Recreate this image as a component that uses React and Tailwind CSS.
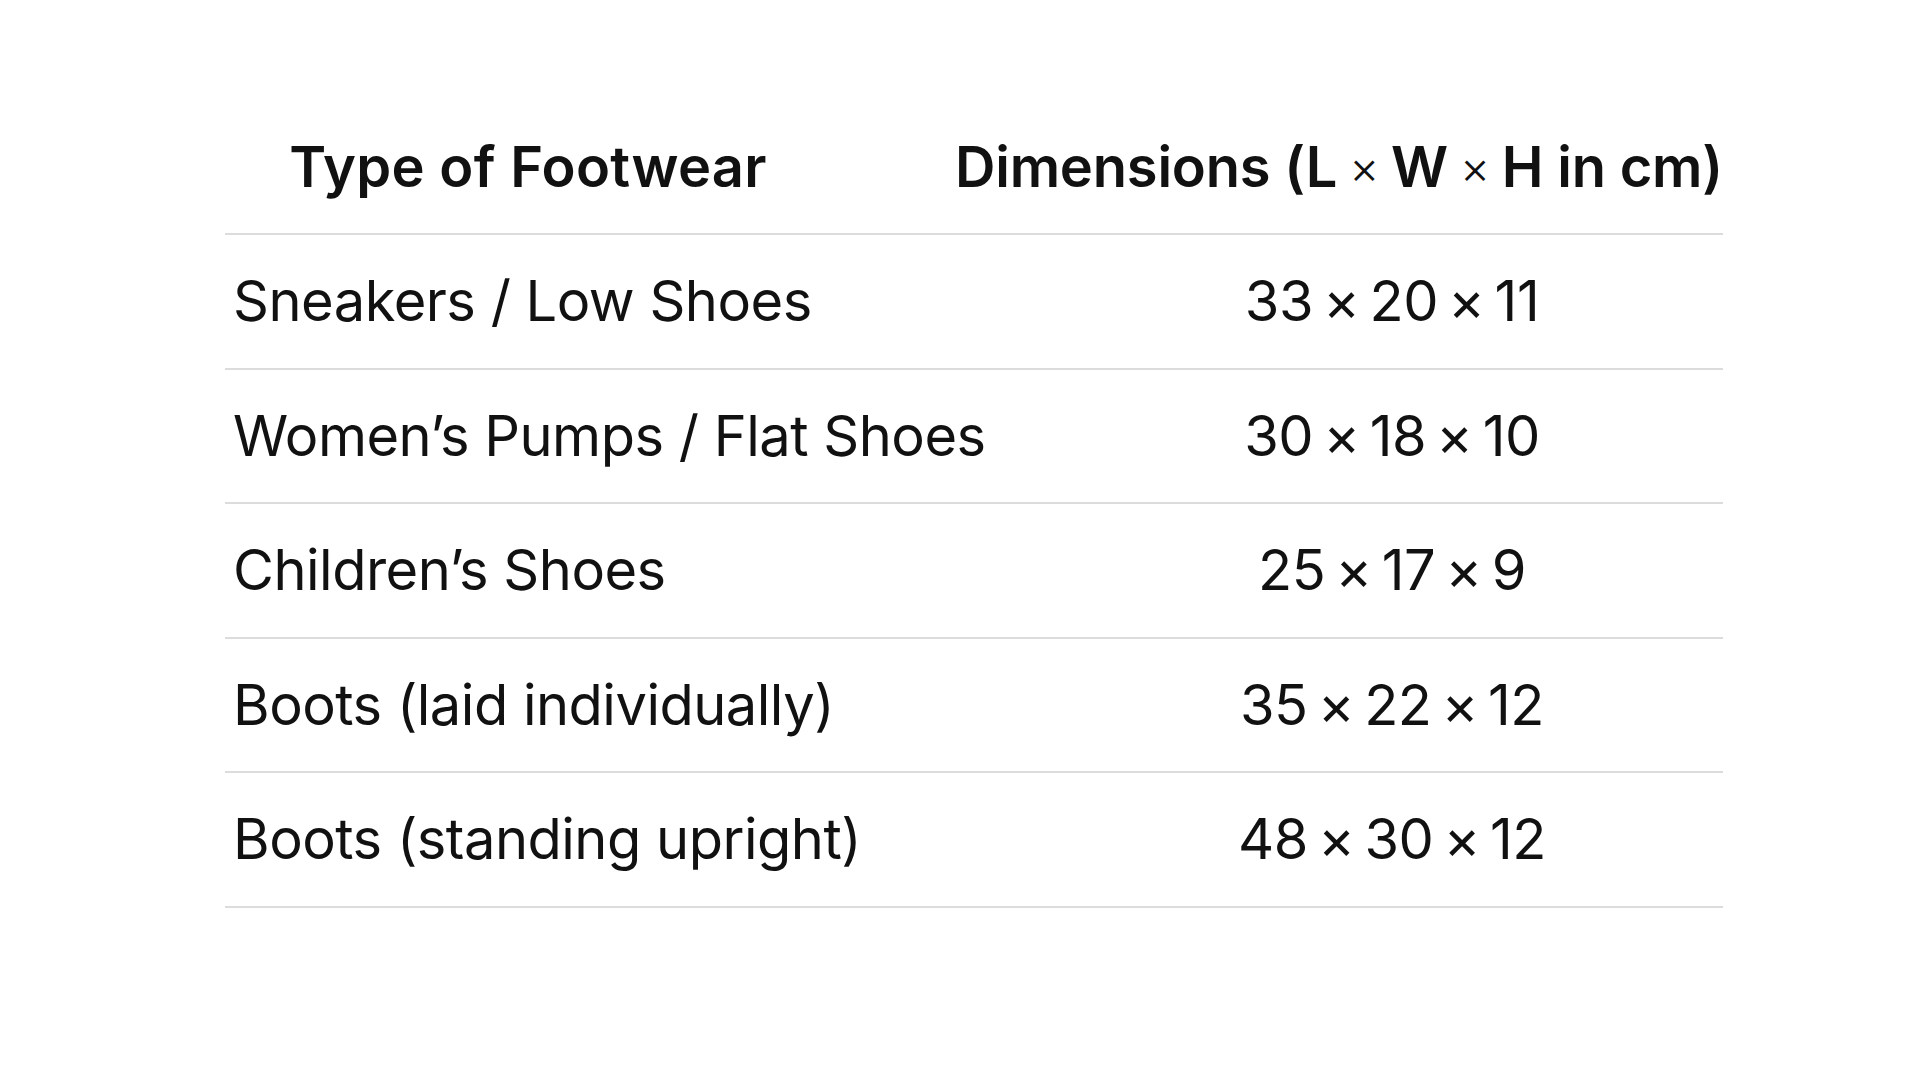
import React from "react";

const rows = [
  { type: "Sneakers / Low Shoes", dims: ["33", "20", "11"] },
  { type: "Women’s Pumps / Flat Shoes", dims: ["30", "18", "10"] },
  { type: "Children’s Shoes", dims: ["25", "17", "9"] },
  { type: "Boots (laid individually)", dims: ["35", "22", "12"] },
  { type: "Boots (standing upright)", dims: ["48", "30", "12"] },
];

// the header uses a lighter, smaller multiplication sign
function Times() {
  return (
    <span className="inline-block align-[3px] text-[46px] font-light mx-[12px] leading-none">
      ×
    </span>
  );
}

export default function App() {
  return (
    <div
      className="min-h-screen bg-white pt-[100px] pl-[225px] text-[#111111]"
      style={{ fontFamily: "Inter, 'Noto Sans', sans-serif" }}
    >
      <div className="w-[1498px]">
        {/* header */}
        <div className="flex h-[135px] items-center border-b-2 border-[#dcdcdc] text-[56px] font-semibold">
          <div className="w-[606px] text-center whitespace-nowrap tracking-[0.3px]">
            Type of Footwear
          </div>
          <div className="flex-1 text-right whitespace-nowrap tracking-[-0.2px]">
            Dimensions (L<Times />W<Times />H in cm)
          </div>
        </div>

        {/* rows */}
        {rows.map((r, i) => (
          <div
            key={i}
            className="flex h-[134.5px] items-center border-b-2 border-[#dcdcdc] text-[56px] font-normal tracking-[-0.5px]"
          >
            <div className="flex-1 pl-2 whitespace-nowrap">{r.type}</div>
            <div className="w-[662px] text-center whitespace-nowrap">
              {r.dims[0]}
              <span className="mx-[10px]">×</span>
              {r.dims[1]}
              <span className="mx-[10px]">×</span>
              {r.dims[2]}
            </div>
          </div>
        ))}
      </div>
    </div>
  );
}
